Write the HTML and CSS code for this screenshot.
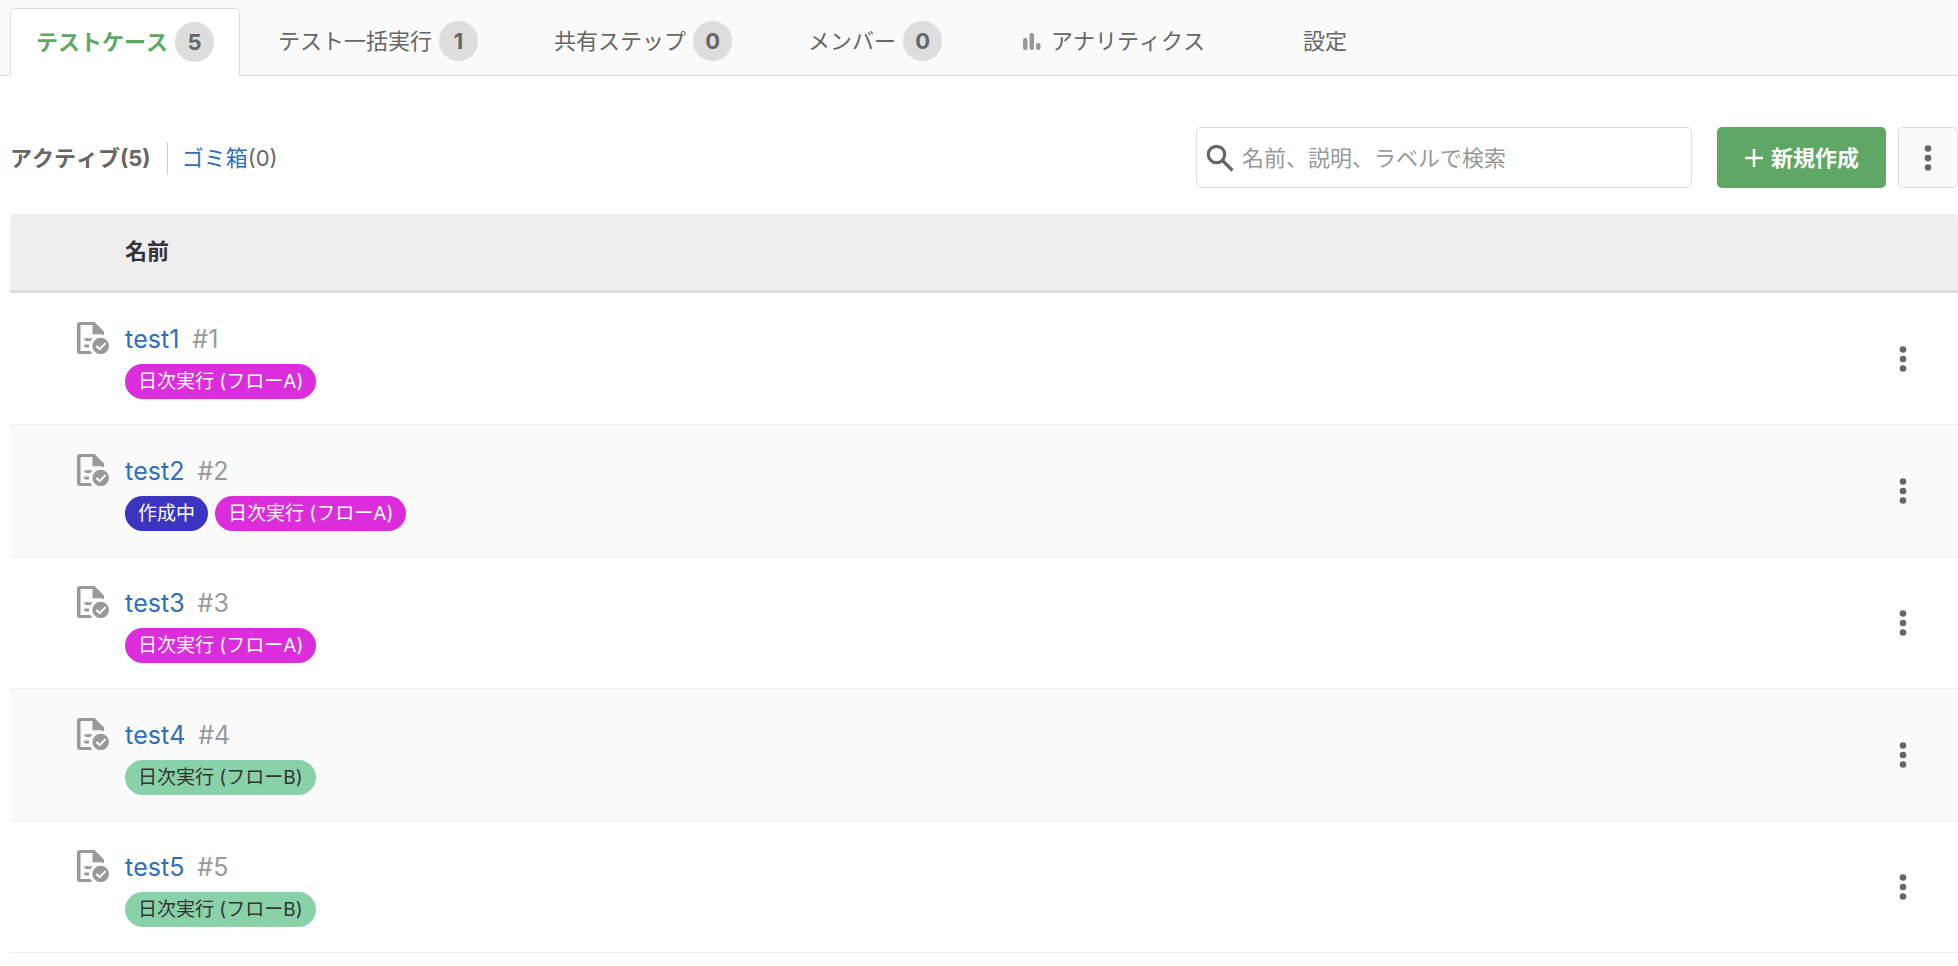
FILE: index.html
```html
<!DOCTYPE html>
<html lang="ja">
<head>
    <meta charset="UTF-8">
    <meta name="viewport" content="width=device-width, initial-scale=1.0">
    <title>テストケース</title>
    <link rel="stylesheet" href="styles.css">
</head>
<body>
    <!-- Shared icons -->
    <svg class="icon-defs" aria-hidden="true">
        <symbol id="icon-more" viewBox="0 0 8 28">
            <circle cx="4" cy="4.5" r="3.3"/>
            <circle cx="4" cy="14" r="3.3"/>
            <circle cx="4" cy="23.5" r="3.3"/>
        </symbol>
        <symbol id="icon-case" viewBox="0 0 32 32">
            <path fill-rule="evenodd" d="M3 0H17.500L27 9.500V13.200C25.500 12.500 24 12.200 22.500 12.200H15.500V3H3.500V29H13.500L15.200 32H3A3 3 0 0 1 0 29V3A3 3 0 0 1 3 0Z"/>
            <path d="M7 16.200H15.500L13.500 19H8.500Z"/>
            <path d="M7.500 22.400H12V25.400H8.500L7 24.400Z"/>
            <circle cx="23.700" cy="24" r="8.300"/>
            <path class="check" d="M19.300 24L22.600 27.100L28.600 21.100"/>
        </symbol>
    </svg>

    <nav class="tabs">
        <a href="#cases" class="tab active">テストケース<span class="badge">5</span></a>
        <a href="#runs" class="tab">テスト一括実行<span class="badge">1</span></a>
        <a href="#steps" class="tab">共有ステップ<span class="badge">0</span></a>
        <a href="#members" class="tab">メンバー<span class="badge">0</span></a>
        <a href="#analytics" class="tab">
            <svg class="icon-chart" viewBox="0 0 28 28" aria-hidden="true">
                <rect x="5" y="11" width="4.500" height="12" rx="2"/>
                <rect x="11.500" y="6" width="4.500" height="17" rx="2"/>
                <rect x="18" y="16" width="4.500" height="7" rx="2"/>
            </svg>アナリティクス</a>
        <a href="#settings" class="tab">設定</a>
    </nav>

    <main class="content">
        <div class="toolbar">
            <div class="filters">
                <strong class="filter">アクティブ(5)</strong>
                <span class="filter"><a href="#trash">ゴミ箱</a>(0)</span>
            </div>
            <label class="search">
                <svg class="icon-search" viewBox="0 0 28 28" aria-hidden="true">
                    <circle cx="10.500" cy="10.500" r="8.200"/>
                    <path d="M16 16L26.500 26.500"/>
                </svg>
                <input type="search" placeholder="名前、説明、ラベルで検索" aria-label="名前、説明、ラベルで検索">
            </label>
            <button type="button" class="btn-create">
                <svg class="icon-plus" viewBox="0 0 20 20" aria-hidden="true"><path d="M10 1V19M1 10H19"/></svg>新規作成
            </button>
            <button type="button" class="btn-menu" aria-label="メニュー"><svg class="icon-more"><use href="#icon-more"/></svg></button>
        </div>

        <table class="case-table">
            <thead>
                <tr>
                    <th class="col-icon"></th>
                    <th>名前</th>
                    <th class="col-menu"></th>
                </tr>
            </thead>
            <tbody>
                <tr>
                    <td class="col-icon"><svg class="icon-case"><use href="#icon-case"/></svg></td>
                    <td>
                        <div class="case-title"><a href="#1">test1</a><span class="case-id">#1</span></div>
                        <div class="labels"><span class="label flow-a">日次実行 (フローA)</span></div>
                    </td>
                    <td class="col-menu"><button type="button" class="row-menu" aria-label="test1 メニュー"><svg class="icon-more"><use href="#icon-more"/></svg></button></td>
                </tr>
                <tr>
                    <td class="col-icon"><svg class="icon-case"><use href="#icon-case"/></svg></td>
                    <td>
                        <div class="case-title"><a href="#2">test2</a><span class="case-id">#2</span></div>
                        <div class="labels"><span class="label draft">作成中</span><span class="label flow-a">日次実行 (フローA)</span></div>
                    </td>
                    <td class="col-menu"><button type="button" class="row-menu" aria-label="test2 メニュー"><svg class="icon-more"><use href="#icon-more"/></svg></button></td>
                </tr>
                <tr>
                    <td class="col-icon"><svg class="icon-case"><use href="#icon-case"/></svg></td>
                    <td>
                        <div class="case-title"><a href="#3">test3</a><span class="case-id">#3</span></div>
                        <div class="labels"><span class="label flow-a">日次実行 (フローA)</span></div>
                    </td>
                    <td class="col-menu"><button type="button" class="row-menu" aria-label="test3 メニュー"><svg class="icon-more"><use href="#icon-more"/></svg></button></td>
                </tr>
                <tr>
                    <td class="col-icon"><svg class="icon-case"><use href="#icon-case"/></svg></td>
                    <td>
                        <div class="case-title"><a href="#4">test4</a><span class="case-id">#4</span></div>
                        <div class="labels"><span class="label flow-b">日次実行 (フローB)</span></div>
                    </td>
                    <td class="col-menu"><button type="button" class="row-menu" aria-label="test4 メニュー"><svg class="icon-more"><use href="#icon-more"/></svg></button></td>
                </tr>
                <tr>
                    <td class="col-icon"><svg class="icon-case"><use href="#icon-case"/></svg></td>
                    <td>
                        <div class="case-title"><a href="#5">test5</a><span class="case-id">#5</span></div>
                        <div class="labels"><span class="label flow-b">日次実行 (フローB)</span></div>
                    </td>
                    <td class="col-menu"><button type="button" class="row-menu" aria-label="test5 メニュー"><svg class="icon-more"><use href="#icon-more"/></svg></button></td>
                </tr>
            </tbody>
        </table>
    </main>
</body>
</html>
```
FILE: styles.css
```css
* {
    box-sizing: border-box;
}
body {
    margin: 0;
    font-family: Inter, "Noto Sans CJK JP", sans-serif;
    font-size: 22px;
    font-kerning: none; /* keep kana at full width */
    line-height: 32px;
    color: #666;
    background-color: #fff;
}
a {
    color: #2f6fbd;
    text-decoration: none;
}
button, input {
    font: inherit;
    color: inherit;
}
button {
    cursor: pointer;
}
svg {
    display: block;
    flex: none;
}
.icon-defs {
    position: absolute;
    width: 0;
    height: 0;
}

/* Tabs */
.tabs {
    display: flex;
    height: 76px;
    padding: 8px 0 0 10px;
    background-color: #fafafa;
    border-bottom: 1px solid #ddd;
}
.tab {
    display: flex;
    align-items: center;
    justify-content: center;
    min-width: 164px;
    padding: 0 38px 2px;
    color: #666;
    white-space: nowrap;
}
.tab.active {
    height: 68px;
    padding: 0 25px 1px;
    font-weight: bold;
    color: #5fa764;
    background-color: #fff;
    border: 1px solid #ddd;
    border-bottom: none;
    border-radius: 5px 5px 0 0;
}
.badge {
    min-width: 39px;
    margin-left: 7px;
    border-radius: 20px;
    font-weight: bold;
    line-height: 40px;
    text-align: center;
    color: #666;
    background-color: #ddd;
}
.icon-chart {
    width: 28px;
    height: 28px;
    margin-right: 5px;
    fill: #999;
}

/* Toolbar */
.content {
    padding: 51px 0 0 10px;
}
.toolbar {
    display: flex;
    align-items: center;
    margin-bottom: 26px;
}
.filters {
    display: flex;
    flex: 1;
}
.filter + .filter {
    margin-left: 16px;
    padding-left: 14px;
    border-left: 1px solid #ccc;
}
.search {
    display: flex;
    align-items: center;
    width: 496px;
    height: 61px;
    padding: 0 9px;
    border: 1px solid #ddd;
    border-radius: 5px;
}
.search input {
    flex: 1;
    min-width: 0;
    margin-left: 8px;
    padding: 0;
    border: none;
    outline: none;
    background: none;
}
.search input::placeholder {
    color: #999;
    opacity: 1;
}
.icon-search {
    width: 28px;
    height: 28px;
    fill: none;
    stroke: #666;
    stroke-width: 3.2;
}
.btn-create {
    display: flex;
    align-items: center;
    height: 61px;
    margin: 0 12px 0 25px;
    padding: 0 27px;
    border: none;
    border-radius: 5px;
    font-weight: bold;
    color: #fff;
    background-color: #5fa764;
}
.icon-plus {
    width: 20px;
    height: 20px;
    margin-right: 7px;
    stroke: #fff;
    stroke-width: 2.5;
}
.btn-menu {
    display: flex;
    align-items: center;
    justify-content: center;
    width: 60px;
    height: 61px;
    padding: 0;
    border: 1px solid #ddd;
    border-radius: 5px;
    background-color: #fafafa;
}
.icon-more {
    width: 8px;
    height: 28px;
    fill: #666;
}

/* Test case list */
.case-table {
    width: 100%;
    border-spacing: 0;
}
.case-table th {
    height: 79px;
    padding: 0 0 2px;
    text-align: left;
    color: #333;
    background-color: #eee;
    border-bottom: 3px solid #ddd;
}
.case-table th:first-child {
    border-top-left-radius: 5px;
}
.case-table th:last-child {
    border-top-right-radius: 5px;
}
.case-table td {
    height: 132px;
    padding: 29px 0 0;
    vertical-align: top;
    border-bottom: 1px solid #eee;
}
.case-table tr:nth-child(even) td {
    background-color: #fafafa;
}
.case-table .col-icon {
    width: 115px;
    padding-left: 67px;
}
.case-table .col-menu {
    width: 110px;
    padding: 0;
    vertical-align: middle;
}
.icon-case {
    width: 32px;
    height: 32px;
    fill: #999;
}
.check {
    fill: none;
    stroke: #fff;
    stroke-width: 2;
}
.case-title {
    font-size: 25px;
    line-height: 34px;
}
.case-id {
    margin-left: 13px;
    color: #999;
}
.labels {
    display: flex;
    gap: 7px;
    margin-top: 8px;
}
.label {
    padding: 0 13px;
    border-radius: 18px;
    font-size: 19px;
    line-height: 35px;
    white-space: nowrap;
}
.flow-a {
    color: #fff;
    background-color: #db2ddb;
}
.draft {
    color: #fff;
    background-color: #3a34c0;
}
.flow-b {
    color: #333;
    background-color: #89d1a9;
}
.row-menu {
    display: flex;
    align-items: center;
    justify-content: center;
    width: 60px;
    height: 60px;
    margin: 0 auto;
    padding: 0;
    border: none;
    background: none;
}
```
